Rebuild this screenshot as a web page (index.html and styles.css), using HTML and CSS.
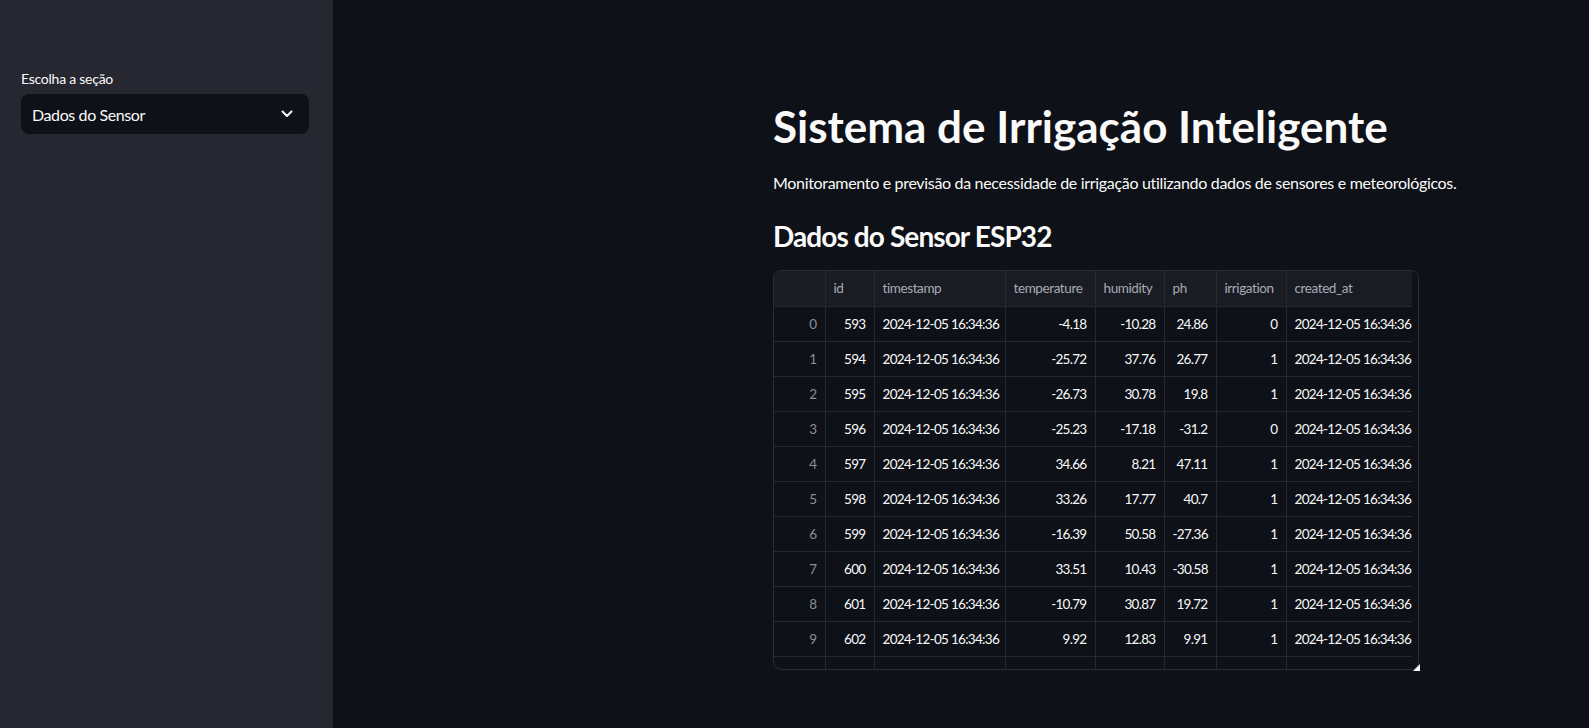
FILE: index.html
```html
<!DOCTYPE html>
<html lang="pt">
<head>
<meta charset="utf-8">
<title>Sistema de Irrigação Inteligente</title>
<link rel="stylesheet" href="styles.css">
</head>
<body>
<div class="app">
  <aside class="sidebar">
    <label class="label">Escolha a seção</label>
    <div class="select">
      <span>Dados do Sensor</span>
      <svg class="chev" width="12" height="8" viewBox="0 0 12 8"><path d="M1.5 1.5 L6 6 L10.5 1.5" fill="none" stroke="#fafafa" stroke-width="2" stroke-linecap="round" stroke-linejoin="round"/></svg>
    </div>
  </aside>
  <main class="main">
    <div class="block">
      <h1 class="title">Sistema de Irrigação Inteligente</h1>
      <p class="lead">Monitoramento e previsão da necessidade de irrigação utilizando dados de sensores e meteorológicos.</p>
      <h3 class="sub">Dados do Sensor ESP32</h3>
      <div class="frame">
        <table class="grid">
          <colgroup>
            <col class="c-idx"><col class="c-id"><col class="c-ts"><col class="c-temp"><col class="c-hum"><col class="c-ph"><col class="c-irr"><col class="c-cr">
          </colgroup>
          <thead>
            <tr><th></th><th>id</th><th>timestamp</th><th>temperature</th><th>humidity</th><th>ph</th><th>irrigation</th><th>created_at</th></tr>
          </thead>
          <tbody>
            <tr><td class="idx">0</td><td class="num">593</td><td>2024-12-05 16:34:36</td><td class="num">-4.18</td><td class="num">-10.28</td><td class="num">24.86</td><td class="num">0</td><td>2024-12-05 16:34:36</td></tr>
            <tr><td class="idx">1</td><td class="num">594</td><td>2024-12-05 16:34:36</td><td class="num">-25.72</td><td class="num">37.76</td><td class="num">26.77</td><td class="num">1</td><td>2024-12-05 16:34:36</td></tr>
            <tr><td class="idx">2</td><td class="num">595</td><td>2024-12-05 16:34:36</td><td class="num">-26.73</td><td class="num">30.78</td><td class="num">19.8</td><td class="num">1</td><td>2024-12-05 16:34:36</td></tr>
            <tr><td class="idx">3</td><td class="num">596</td><td>2024-12-05 16:34:36</td><td class="num">-25.23</td><td class="num">-17.18</td><td class="num">-31.2</td><td class="num">0</td><td>2024-12-05 16:34:36</td></tr>
            <tr><td class="idx">4</td><td class="num">597</td><td>2024-12-05 16:34:36</td><td class="num">34.66</td><td class="num">8.21</td><td class="num">47.11</td><td class="num">1</td><td>2024-12-05 16:34:36</td></tr>
            <tr><td class="idx">5</td><td class="num">598</td><td>2024-12-05 16:34:36</td><td class="num">33.26</td><td class="num">17.77</td><td class="num">40.7</td><td class="num">1</td><td>2024-12-05 16:34:36</td></tr>
            <tr><td class="idx">6</td><td class="num">599</td><td>2024-12-05 16:34:36</td><td class="num">-16.39</td><td class="num">50.58</td><td class="num">-27.36</td><td class="num">1</td><td>2024-12-05 16:34:36</td></tr>
            <tr><td class="idx">7</td><td class="num">600</td><td>2024-12-05 16:34:36</td><td class="num">33.51</td><td class="num">10.43</td><td class="num">-30.58</td><td class="num">1</td><td>2024-12-05 16:34:36</td></tr>
            <tr><td class="idx">8</td><td class="num">601</td><td>2024-12-05 16:34:36</td><td class="num">-10.79</td><td class="num">30.87</td><td class="num">19.72</td><td class="num">1</td><td>2024-12-05 16:34:36</td></tr>
            <tr><td class="idx">9</td><td class="num">602</td><td>2024-12-05 16:34:36</td><td class="num">9.92</td><td class="num">12.83</td><td class="num">9.91</td><td class="num">1</td><td>2024-12-05 16:34:36</td></tr>
            <tr class="partial"><td class="idx"></td><td></td><td></td><td></td><td></td><td></td><td></td><td></td></tr>
          </tbody>
        </table>
      </div>
      <span class="resize"></span>
    </div>
  </main>
</div>
</body>
</html>
```

FILE: styles.css
```css
* { box-sizing: border-box; }
html, body {
  margin: 0;
  padding: 0;
  height: 100%;
  background: #0e1117;
  color: #fafafa;
  font-family: Lato, "Noto Sans", sans-serif;
}
.app {
  display: flex;
  height: 728px;
  overflow: hidden;
}
.sidebar {
  width: 333px;
  flex: 0 0 333px;
  background: #262730;
  padding: 70px 24px 0 21px;
  display: flex;
  flex-direction: column;
}
.label {
  font-size: 14px;
  line-height: 18px;
  letter-spacing: -0.25px;
  color: #fafafa;
  margin-bottom: 6px;
}
.select {
  height: 40px;
  width: 288px;
  background: #0e1117;
  border-radius: 8px;
  display: flex;
  align-items: center;
  justify-content: space-between;
  padding: 0 16px 0 11px;
  font-size: 16px;
  letter-spacing: -0.4px;
}
.chev { display: block; }
.main {
  flex: 1;
  padding: 98px 0 0 440px;
}
.block {
  position: relative;
  width: 646px;
}
.title {
  margin: 0;
  font-size: 44px;
  line-height: 56px;
  font-weight: 700;
  white-space: nowrap;
}
.lead {
  margin: 17px 0 0;
  font-size: 16px;
  line-height: 24px;
  letter-spacing: -0.32px;
  white-space: nowrap;
}
.sub {
  margin: 21px 0 0;
  font-size: 28px;
  line-height: 40px;
  letter-spacing: -0.9px;
  font-weight: 700;
}
.frame {
  margin-top: 14px;
  height: 400px;
  border: 1px solid #2a2d35;
  border-radius: 8px;
  overflow: hidden;
  background: #0e1117;
}
.grid {
  border-collapse: collapse;
  table-layout: fixed;
  width: 638px;
  font-size: 13.5px;
  letter-spacing: -0.7px;
}
.c-idx { width: 51px; }
.c-id { width: 49px; }
.c-ts { width: 131px; }
.c-temp { width: 90px; }
.c-hum { width: 69px; }
.c-ph { width: 52px; }
.c-irr { width: 70px; }
.c-cr { width: 126px; }
.grid th, .grid td {
  height: 35px;
  padding: 0 8px;
  white-space: nowrap;
  overflow: hidden;
  border-right: 1px solid #262930;
  border-bottom: 1px solid #262930;
}
.grid th {
  background: #1a1c24;
  color: #a7abb6;
  font-weight: 400;
  letter-spacing: -0.4px;
  text-align: left;
}
.grid td { color: #fafafa; }
.grid td.num, .grid td.idx { text-align: right; }
.grid td.idx { color: #8b8e97; }
.grid th:last-child, .grid td:last-child { border-right: none; }
.grid tr.partial td { border-bottom: none; }
.resize {
  position: absolute;
  right: -1px;
  bottom: -1px;
  width: 0;
  height: 0;
  border-left: 7px solid transparent;
  border-bottom: 7px solid #fafafa;
}
```
